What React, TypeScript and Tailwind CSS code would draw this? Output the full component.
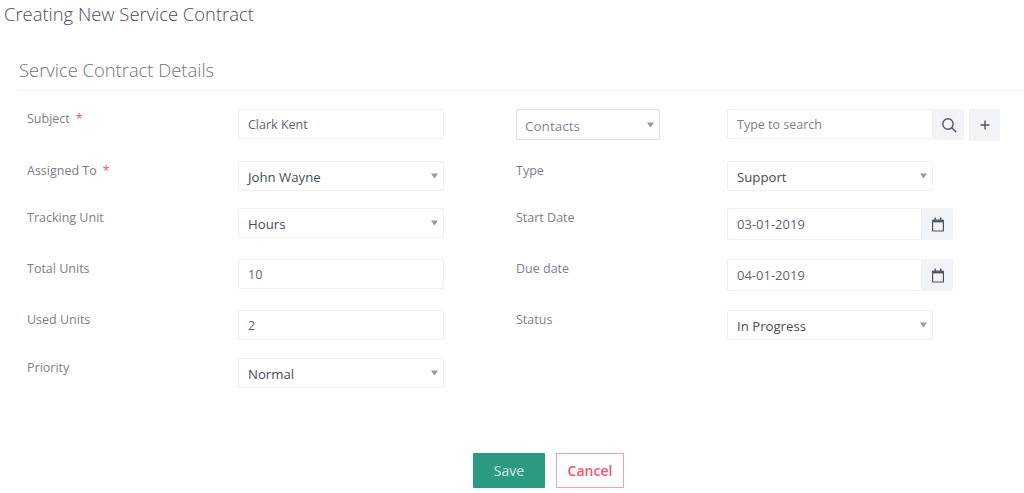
const inputBox = "h-[30px] bg-white border border-[#eeeff2] rounded-[2px] px-[9px] flex items-center text-[12.5px] text-[#5f6470]";

const Caret = ({ color = "#96999f" }: { color?: string }) => (
  <svg width="7" height="6" viewBox="0 0 7 6" className="shrink-0">
    <path d="M0 0.5h7L3.5 5.5z" fill={color} />
  </svg>
);

const SearchIcon = () => (
  <svg width="16" height="16" viewBox="0 0 16 16" fill="none" stroke="#4f5560" strokeWidth="1.4">
    <circle cx="7" cy="7" r="5.2" />
    <path d="M10.8 10.8l4 4" strokeLinecap="round" />
  </svg>
);

const PlusIcon = () => (
  <svg width="10" height="10" viewBox="0 0 10 10" fill="none" stroke="#4f5560" strokeWidth="1.4">
    <path d="M5 0.5v9M0.5 5h9" />
  </svg>
);

const CalendarIcon = () => (
  <svg width="12" height="15" viewBox="0 0 12 15" fill="none" stroke="#4f5560" strokeWidth="1.2">
    <rect x="0.6" y="3.2" width="10.8" height="10.8" rx="0.6" />
    <path d="M0.6 4.4h10.8" strokeWidth="2" />
    <path d="M3.2 0.6v3M8.8 0.6v3" strokeWidth="1.4" />
  </svg>
);

const Label = ({ text, required }: { text: string; required?: boolean }) => (
  <div className="text-[12.5px] leading-[18px] text-[#7b7f8a] mt-[1px]">
    {text}
    {required && <span className="text-[#f5556e] ml-[6px]">*</span>}
  </div>
);

const TextField = ({ value }: { value: string }) => (
  <div className={`${inputBox} w-[206px]`}>
    <span className="pt-[3px]">{value}</span>
  </div>
);

const SelectField = ({ value }: { value: string }) => (
  <div className={`${inputBox} w-[206px] justify-between pr-[5px] !text-[13.2px] !text-[#474c57]`}>
    <span className="pt-[3px]">{value}</span>
    <Caret />
  </div>
);

const DateField = ({ value }: { value: string }) => (
  <div className="flex h-[32px]">
    <div className="w-[195px] bg-white border border-[#eeeff2] rounded-l-[2px] px-[9px] flex items-center text-[13px] text-[#5f6470]">
      <span className="pt-[2px]">{value}</span>
    </div>
    <div className="w-[31px] bg-[#f2f3f7] rounded-r-[2px] flex items-center justify-center">
      <CalendarIcon />
    </div>
  </div>
);

const Row = ({
  left,
  field,
  right,
  rightField,
  className,
}: {
  left: React.ReactNode;
  field: React.ReactNode;
  right?: React.ReactNode;
  rightField?: React.ReactNode;
  className: string;
}) => (
  <div className={`flex items-start ${className}`}>
    <div className="w-[219px] pl-[8px]">{left}</div>
    <div className="w-[278px]">{field}</div>
    <div className="w-[211px]">{right}</div>
    <div>{rightField}</div>
  </div>
);

export default function App() {
  return (
    <div className="w-[1024px] h-[493px] overflow-hidden bg-white font-['Open_Sans',sans-serif]">
      <h1 className="pl-[4px] pt-[1px] text-[18.4px] leading-[25px] font-light text-[#4a4e57]">
        Creating New Service Contract
      </h1>

      <div className="ml-[19px] mt-[31px] h-[34px] border-b border-[#f0f1f3]">
        <h2 className="text-[18.4px] leading-[25px] font-light text-[#6f7480]">Service Contract Details</h2>
      </div>

      <div className="ml-[19px] mt-[18px]">
        <Row
          className="h-[52px]"
          left={<Label text="Subject" required />}
          field={<TextField value="Clark Kent" />}
          right={
            <div className="w-[144px] h-[31px] border border-[#dfe1e5] rounded-[2px] pl-[8px] pr-[5px] flex items-center justify-between text-[13.5px] text-[#83878f]">
              <span className="pt-[4px]">Contacts</span>
              <Caret />
            </div>
          }
          rightField={
            <div className="flex items-start">
              <div className={`${inputBox} w-[206px] !text-[#7c808a]`}>
                <span className="pt-[3px]">Type to search</span>
              </div>
              <div className="w-[31px] h-[31px] bg-[#f2f3f7] rounded-r-[2px] flex items-center justify-center">
                <SearchIcon />
              </div>
              <div className="ml-[5px] w-[31px] h-[32px] bg-[#f2f3f7] flex items-center justify-center">
                <PlusIcon />
              </div>
            </div>
          }
        />
        <Row
          className="h-[47px]"
          left={<Label text="Assigned To" required />}
          field={<SelectField value="John Wayne" />}
          right={<Label text="Type" />}
          rightField={<SelectField value="Support" />}
        />
        <Row
          className="h-[51px]"
          left={<Label text="Tracking Unit" />}
          field={<SelectField value="Hours" />}
          right={<Label text="Start Date" />}
          rightField={<DateField value="03-01-2019" />}
        />
        <Row
          className="h-[51px]"
          left={<Label text="Total Units" />}
          field={<TextField value="10" />}
          right={<Label text="Due date" />}
          rightField={<DateField value="04-01-2019" />}
        />
        <Row
          className="h-[48px]"
          left={<Label text="Used Units" />}
          field={<TextField value="2" />}
          right={<Label text="Status" />}
          rightField={<SelectField value="In Progress" />}
        />
        <Row
          className="h-[30px]"
          left={<Label text="Priority" />}
          field={<SelectField value="Normal" />}
        />
      </div>

      <div className="mt-[65px] flex items-start pl-[473px] gap-[11px]">
        <button className="w-[72px] h-[35px] bg-[#2a9a80] text-[14px] text-[#d3eee6] rounded-[1px]">Save</button>
        <button className="w-[68px] h-[35px] border border-[#f7a0ae] bg-white text-[14px] font-semibold text-[#f5566f]">
          Cancel
        </button>
      </div>
    </div>
  );
}
